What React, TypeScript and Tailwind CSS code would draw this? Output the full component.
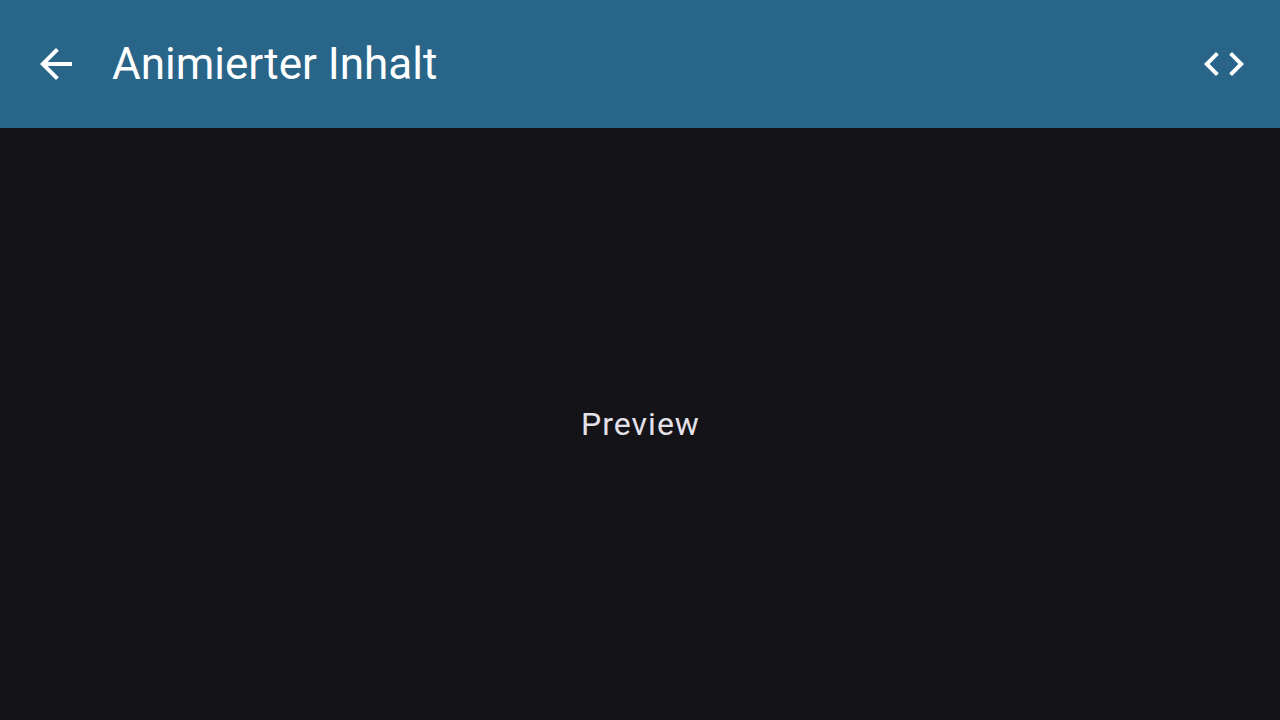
export default function App() {
  return (
    <div className="flex h-screen w-full flex-col overflow-hidden bg-[#141318] font-[Roboto,sans-serif]">
      <header className="flex h-32 shrink-0 items-center bg-[#296588] pr-6 pl-8 text-white">
        <button type="button" aria-label="Zurück" className="shrink-0">
          <svg viewBox="0 0 24 24" className="size-12" fill="currentColor">
            <path d="M20 11H7.83l5.59-5.59L12 4l-8 8 8 8 1.41-1.41L7.83 13H20v-2z" />
          </svg>
        </button>
        <h1 className="ml-8 grow text-[44px] leading-[56px] font-normal">Animierter Inhalt</h1>
        <button type="button" aria-label="Code" className="mr-2 shrink-0">
          <svg viewBox="0 0 24 24" className="size-12" fill="currentColor">
            <path d="M9.4 16.6 4.8 12l4.6-4.6L8 6l-6 6 6 6 1.4-1.4zm5.2 0 4.6-4.6-4.6-4.6L16 6l6 6-6 6-1.4-1.4z" />
          </svg>
        </button>
      </header>
      <main className="flex grow items-center justify-center">
        <p className="pl-px text-[32px] leading-[48px] tracking-[1px] text-[#e5e1e9]">Preview</p>
      </main>
    </div>
  );
}
